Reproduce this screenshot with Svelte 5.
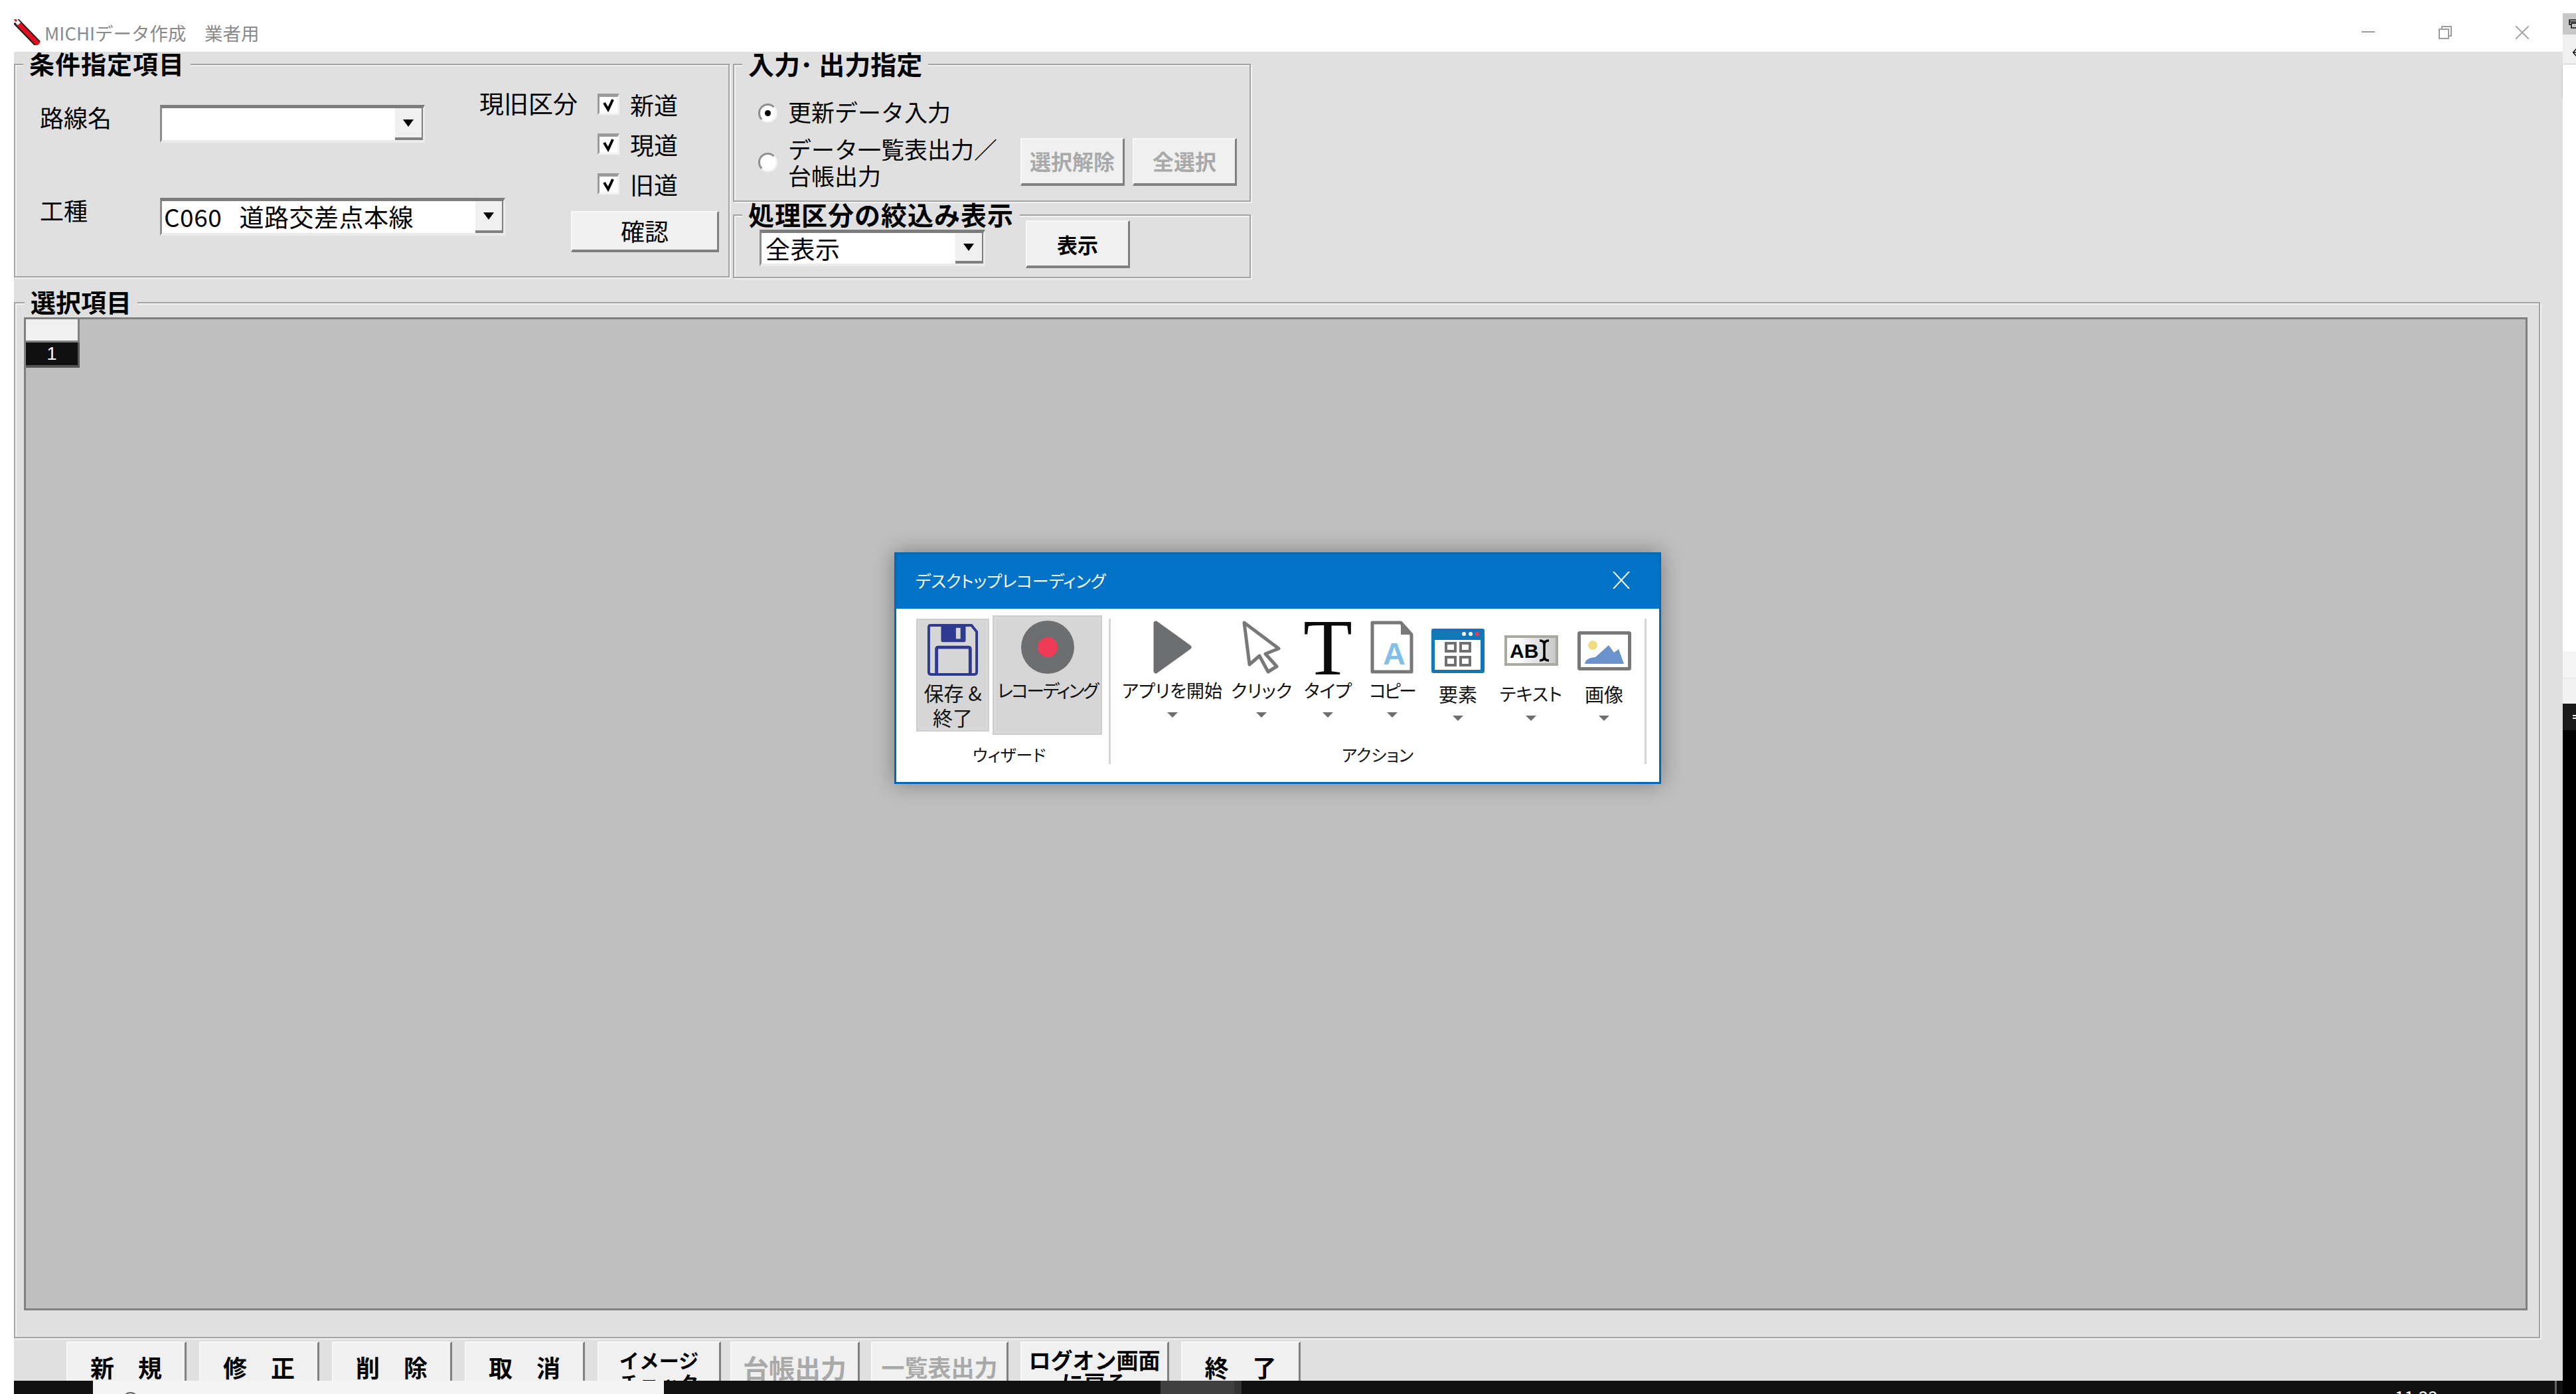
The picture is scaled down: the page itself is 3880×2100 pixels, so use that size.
<script>
	const actions = [
		{ lines: ['新　規'], w: 181, gap: 19 },
		{ lines: ['修　正'], w: 181, gap: 19 },
		{ lines: ['削　除'], w: 181, gap: 19 },
		{ lines: ['取　消'], w: 181, gap: 19 },
		{ lines: ['イメージ', 'チェック'], w: 186, gap: 14 },
		{ lines: ['台帳出力'], w: 195, gap: 17, off: true },
		{ lines: ['一覧表出力'], w: 207, gap: 18, off: true, tight: true },
		{ lines: ['ログオン画面', 'に戻る'], w: 224, gap: 18, big: true },
		{ lines: ['終　了'], w: 180, gap: 0 }
	];
</script>

<div class="screen">
	<div class="main">
		<header class="titlebar">
			<svg class="pencil" width="41" height="39" viewBox="0 0 41 39">
				<path d="M3 3 L36 37" stroke="#1a1a1a" stroke-width="11" />
				<path d="M5 5 L37 38" stroke="#e01020" stroke-width="7" />
				<path d="M2 1 L8 7" stroke="#f4f4f4" stroke-width="6" />
				<path d="M1 0 L4 3" stroke="#e01020" stroke-width="3" />
			</svg>
			<span class="apptitle">MICHIデータ作成　業者用</span>
			<div class="winctl">
				<svg width="20" height="20" viewBox="0 0 20 20"><path d="M0 9h20" stroke="#9c9c9c" stroke-width="2" /></svg>
				<svg width="20" height="20" viewBox="0 0 20 20" fill="none" stroke="#9c9c9c" stroke-width="2">
					<rect x="1" y="5" width="14" height="14" />
					<path d="M5 5V1h14v14h-4" />
				</svg>
				<svg width="20" height="20" viewBox="0 0 20 20"><path d="M0 0l20 20M20 0L0 20" stroke="#a6a6a6" stroke-width="2" /></svg>
			</div>
		</header>

		<div class="win">
			<div class="top">
				<fieldset class="cond">
					<legend>条件指定項目</legend>
					<div class="cond-body">
						<div class="cond-left">
							<div class="field">
								<span class="label">路線名</span>
								<div class="combo route"><span class="val"></span><span class="drop"><i></i></span></div>
							</div>
							<div class="field">
								<span class="label">工種</span>
								<div class="combo kind"><span class="val">C060   道路交差点本線</span><span class="drop"><i></i></span></div>
							</div>
						</div>
						<div class="cond-right">
							<div class="checks">
								<span class="label">現旧区分</span>
								<div class="checklist">
									{#each ['新道', '現道', '旧道'] as name}
										<div class="check">
											<span class="box">
												<svg width="22" height="22" viewBox="0 0 22 22"><path d="M4 8l6 10 7-15" fill="none" stroke="#000" stroke-width="4" /></svg>
											</span>
											<span class="label">{name}</span>
										</div>
									{/each}
								</div>
							</div>
							<button class="raised confirm">確認</button>
						</div>
					</div>
				</fieldset>

				<div class="top-right">
					<fieldset class="io">
						<legend>入力･ 出力指定</legend>
						<div class="io-row first">
							<span class="radio on"></span>
							<span class="label narrow">更新データ入力</span>
						</div>
						<div class="io-row second">
							<span class="radio"></span>
							<span class="label narrow two">データ一覧表出力／<br />台帳出力</span>
							<button class="raised sel" disabled>選択解除</button>
							<button class="raised sel" disabled>全選択</button>
						</div>
					</fieldset>
					<fieldset class="filter">
						<legend>処理区分の絞込み表示</legend>
						<div class="filter-row">
							<div class="combo all"><span class="val">全表示</span><span class="drop"><i></i></span></div>
							<button class="raised show">表示</button>
						</div>
					</fieldset>
				</div>
			</div>

			<fieldset class="items">
				<legend>選択項目</legend>
				<div class="grid">
					<div class="corner"></div>
					<div class="cell">1</div>
				</div>
			</fieldset>

			<div class="actions">
				{#each actions as a}
					<button
						class="raised act"
						class:two={a.lines.length > 1}
						class:tight={a.tight}
						class:big={a.big}
						disabled={a.off}
						style="width:{a.w}px;margin-right:{a.gap}px"
					>
						{#each a.lines as line}<span>{line}</span>{/each}
					</button>
				{/each}
			</div>
		</div>

		<footer class="taskbar">
			<div class="start"></div>
			<div class="search"><i></i></div>
			<div class="apps"></div>
			<div class="running"></div>
			<div class="running-edge"></div>
			<div class="tray"><span>11:22</span></div>
			<div class="showdesk"></div>
		</footer>
	</div>

	<aside class="rail">
		<div class="r-top"></div>
		<div class="r-tab">
			<svg width="11" height="14" viewBox="0 0 11 14" fill="none" stroke="#111" stroke-width="1.5"><path d="M11 1H1v7h3M1 4h10" /><rect x="4" y="6" width="9" height="7" /></svg>
		</div>
		<div class="r-back">
			<svg width="5" height="14" viewBox="0 0 5 14" fill="none" stroke="#111" stroke-width="1.5"><path d="M6 1L0.5 7 6 13M1 7h6" /></svg>
		</div>
		<div class="r-menu"></div>
		<div class="r-page"></div>
		<div class="r-a"></div>
		<div class="r-b"></div>
		<div class="r-c"><i></i></div>
		<div class="r-d"></div>
	</aside>

	<div class="dialog">
		<div class="dlg-title">
			<span>デスクトップレコーディング</span>
			<svg width="26" height="26" viewBox="0 0 26 26"><path d="M1 0l24 26M25 0L1 26" stroke="#fff" stroke-width="2" /></svg>
		</div>
		<div class="dlg-body">
			<div class="group wizard">
				<div class="tools">
					<div class="wbtn save">
						<svg width="78" height="80" viewBox="0 0 78 80">
							<path d="M5 2H68L76 12V74Q76 78 72 78H6Q2 78 2 74V5Q2 2 5 2Z" fill="none" stroke="#2e3a8f" stroke-width="4" />
							<path d="M21 3H59V25Q59 28 56 28H24Q21 28 21 25Z" fill="#2e3a8f" />
							<rect x="44" y="6" width="7" height="17" fill="#d6d6d6" />
							<path d="M14 78V39Q14 36 17 36H63Q66 36 66 39V78" fill="none" stroke="#2e3a8f" stroke-width="5" />
						</svg>
						<span class="t">保存 &amp;<br />終了</span>
					</div>
					<div class="wbtn rec">
						<svg width="80" height="80" viewBox="0 0 80 80">
							<circle cx="40" cy="40" r="40" fill="#6d6e70" />
							<circle cx="40" cy="40" r="15" fill="#ef3b55" />
						</svg>
						<span class="t">レコーディング</span>
					</div>
				</div>
				<span class="glabel">ウィザード</span>
			</div>
			<div class="sep"></div>
			<div class="group acts">
				<div class="tools">
					<div class="tool play">
						<div class="slot">
							<svg width="58" height="80" viewBox="0 0 58 80"><path d="M4 4L54 40 4 76Z" fill="#6d6e70" stroke="#6d6e70" stroke-width="7" stroke-linejoin="round" /></svg>
						</div>
						<span class="t">アプリを開始</span><i class="arr"></i>
					</div>
					<div class="tool cursor">
						<div class="slot">
							<svg width="58" height="80" viewBox="0 0 58 80"><path d="M3 3L55 42 35 50 52 69 39 77 26 53 11 66Z" fill="none" stroke="#77787a" stroke-width="5" stroke-linejoin="round" /></svg>
						</div>
						<span class="t">クリック</span><i class="arr"></i>
					</div>
					<div class="tool type">
						<div class="slot"><span class="bigt">T</span></div>
						<span class="t">タイプ</span><i class="arr"></i>
					</div>
					<div class="tool copy">
						<div class="slot">
							<svg width="65" height="80" viewBox="0 0 65 80">
								<path d="M3 3H46L62 21V77H3Z" fill="#fff" stroke="#77787a" stroke-width="5" stroke-linejoin="round" />
								<path d="M46 3L62 21H46Z" fill="#77787a" />
								<text x="19" y="66" class="ic-a">A</text>
							</svg>
						</div>
						<span class="t">コピー</span><i class="arr"></i>
					</div>
					<div class="tool low element">
						<div class="slot">
							<svg width="80" height="67" viewBox="0 0 80 67">
								<rect width="80" height="67" rx="3" fill="#1178b8" />
								<rect x="5" y="17" width="69" height="45" fill="#fff" />
								<circle cx="49" cy="8" r="3" fill="#fff" />
								<circle cx="59" cy="8" r="3" fill="#fff" />
								<circle cx="69" cy="8" r="3" fill="#ef3b55" />
								<g fill="none" stroke="#6f6f6f" stroke-width="4">
									<rect x="22" y="22" width="14" height="12" />
									<rect x="44" y="22" width="14" height="12" />
									<rect x="22" y="43" width="14" height="12" />
									<rect x="44" y="43" width="14" height="12" />
								</g>
							</svg>
						</div>
						<span class="t">要素</span><i class="arr"></i>
					</div>
					<div class="tool low text">
						<div class="slot">
							<svg width="81" height="46" viewBox="0 0 81 46">
								<defs>
									<linearGradient id="abi" x1="0" x2="1">
										<stop offset="0.2" stop-color="#fff" />
										<stop offset="1" stop-color="#c6c6c8" />
									</linearGradient>
								</defs>
								<rect x="2" y="2" width="77" height="42" fill="url(#abi)" stroke="#a9aa9f" stroke-width="4" />
								<text x="8" y="34" class="ic-ab">AB</text>
								<path d="M53 8Q60 8 60 14V32Q60 38 53 38M67 8Q60 8 60 14V32Q60 38 67 38" fill="none" stroke="#000" stroke-width="3.5" />
							</svg>
						</div>
						<span class="t">テキスト</span><i class="arr"></i>
					</div>
					<div class="tool low image">
						<div class="slot">
							<svg width="81" height="59" viewBox="0 0 81 59">
								<rect x="2.5" y="2.5" width="76" height="54" rx="1" fill="#fff" stroke="#77787a" stroke-width="5" />
								<circle cx="23" cy="21" r="7" fill="#efdc82" />
								<path d="M11 49Q12 40 27 39L47 21 55 32 62 27 70 49Z" fill="#6a93cb" />
							</svg>
						</div>
						<span class="t">画像</span><i class="arr"></i>
					</div>
				</div>
				<span class="glabel">アクション</span>
			</div>
			<div class="sep"></div>
		</div>
	</div>
</div>

<style>
	:global(body) {
		margin: 0;
		background: #fff;
	}

	.screen {
		position: relative;
		display: flex;
		width: 3880px;
		height: 2100px;
		overflow: hidden;
		background: #fff;
		font-family: 'Noto Sans CJK JP', sans-serif;
		color: #000;
	}

	.main {
		display: flex;
		flex-direction: column;
		width: 3860px;
		flex: none;
	}

	.titlebar {
		display: flex;
		align-items: center;
		box-sizing: border-box;
		height: 78px;
		padding: 19px 51px 0 21px;
		flex: none;
	}

	.pencil {
		flex: none;
	}

	.apptitle {
		margin-left: 5px;
		font-size: 27.5px;
		color: #8a8a8a;
	}

	.winctl {
		display: flex;
		gap: 96px;
		margin-left: auto;
	}

	.win {
		box-sizing: border-box;
		height: 2002px;
		margin-left: 21px;
		padding-top: 3px;
		overflow: hidden;
		background: #e0e0e0;
		flex: none;
	}

	fieldset {
		box-sizing: border-box;
		min-width: 0;
		margin: 0;
		padding: 0;
		border: 2px solid #a4a4a4;
		box-shadow:
			inset 2px 2px 0 #f2f2f2,
			2px 2px 0 #f2f2f2;
	}

	legend {
		padding: 0 9px 4px;
		background: #e0e0e0;
		font-size: 38px;
		font-weight: 700;
		line-height: 28px;
		white-space: nowrap;
	}

	.top {
		display: flex;
		gap: 5px;
		height: 338px;
		margin-bottom: 21px;
	}

	.cond {
		width: 1078px;
		height: 337px;
	}

	.cond legend {
		margin-left: 12px;
		letter-spacing: 1px;
	}

	.cond-body {
		display: flex;
	}

	.cond-left {
		display: flex;
		flex-direction: column;
		gap: 83px;
		width: 699px;
		flex: none;
		padding: 45px 0 0 37px;
	}

	.field {
		display: flex;
		align-items: flex-start;
		height: 57px;
	}

	.field .label {
		width: 181px;
		flex: none;
		font-size: 36px;
	}

	.label {
		font-size: 36px;
		line-height: 36px;
		white-space: nowrap;
	}

	.combo {
		display: flex;
		box-sizing: border-box;
		height: 57px;
		flex: none;
		background: #fff;
		border-style: solid;
		border-width: 5px 3px 4px 3px;
		border-color: #7c7c7c #ebebeb #ebebeb #8c8c8c;
	}

	.route {
		width: 399px;
	}

	.kind {
		width: 520px;
	}

	.all {
		width: 340px;
		height: 55px;
		margin-top: 14px;
	}

	.val {
		flex: 1;
		padding-left: 3px;
		font-size: 37px;
		letter-spacing: 0.5px;
		line-height: 46px;
		white-space: pre;
	}

	.all .val {
		padding-left: 6px;
		font-size: 37px;
	}

	.drop {
		display: flex;
		align-items: center;
		justify-content: center;
		box-sizing: border-box;
		width: 42px;
		flex: none;
		background: #f0f0f0;
		border-bottom: 4px solid #808080;
		border-right: 2px solid #808080;
	}

	.drop i {
		width: 0;
		height: 0;
		border-style: solid;
		border-width: 11px 8px 0 8px;
		border-color: #000 transparent transparent transparent;
	}

	.cond-right {
		margin-left: -36px;
		padding-top: 24px;
	}

	.checks {
		display: flex;
		align-items: flex-start;
	}

	.checks > .label {
		width: 177px;
		flex: none;
		margin-left: -1px;
		margin-right: 1px;
		font-size: 37px;
	}

	.checklist {
		display: flex;
		flex-direction: column;
		gap: 20px;
	}

	.check {
		display: flex;
		align-items: center;
		gap: 16px;
		height: 40px;
	}

	.box {
		display: flex;
		align-items: center;
		justify-content: center;
		box-sizing: border-box;
		width: 33px;
		height: 32px;
		background: #fff;
		border-style: solid;
		border-width: 5px 3px 3px 3px;
		border-color: #9b9b9b #f2f2f2 #f2f2f2 #9b9b9b;
	}

	.raised {
		box-sizing: border-box;
		padding: 0;
		background: #f0f0f0;
		border-style: solid;
		border-width: 2px 3px 4px 2px;
		border-color: #f8f8f8 #808080 #808080 #f8f8f8;
		border-radius: 0;
		font-family: inherit;
		color: #000;
		white-space: nowrap;
	}

	.raised:disabled {
		color: #a9a9a9;
	}

	.confirm {
		display: block;
		width: 223px;
		height: 62px;
		margin: 21px 0 0 137px;
		padding-bottom: 2px;
		font-size: 36px;
		line-height: 50px;
	}

	.top-right {
		display: flex;
		flex-direction: column;
		gap: 4px;
		width: 780px;
	}

	.io {
		height: 223px;
	}

	.io legend {
		margin-left: 12px;
		font-size: 39px;
	}

	.filter legend {
		margin-left: 12px;
		font-size: 39px;
		letter-spacing: 1px;
	}

	.io-row {
		display: flex;
		align-items: center;
		padding-left: 36px;
	}

	.first {
		height: 40px;
		margin-top: 37px;
	}

	.first .label {
		margin-bottom: 5px;
	}

	.second {
		height: 78px;
		margin-top: 15px;
	}

	.radio {
		display: flex;
		align-items: center;
		justify-content: center;
		box-sizing: border-box;
		width: 29px;
		height: 29px;
		flex: none;
		margin-right: 16px;
		background: #fff;
		border: 3px solid;
		border-color: #8f8f8f #f4f4f4 #f4f4f4 #8f8f8f;
		border-radius: 50%;
	}

	.radio.on::after {
		content: '';
		width: 9px;
		height: 9px;
		background: #000;
		border-radius: 50%;
	}

	.narrow {
		font-size: 35px;
	}

	.two {
		width: 350px;
		flex: none;
		line-height: 40px;
	}

	.sel {
		width: 157px;
		height: 72px;
		margin-right: 12px;
		padding-bottom: 3px;
		font-size: 32px;
		font-weight: 700;
		flex: none;
	}

	.filter {
		height: 111px;
	}

	.filter-row {
		display: flex;
		align-items: flex-start;
		gap: 61px;
		margin-top: -8px;
		padding-left: 38px;
	}

	.show {
		width: 157px;
		height: 72px;
		font-size: 31px;
		font-weight: 700;
	}

	.items {
		width: 3805px;
		height: 1576px;
		padding: 6px 17px 0 13px;
	}

	.items legend {
		margin-left: 1px;
	}

	.grid {
		box-sizing: border-box;
		height: 1496px;
		background: #bfbfbf;
		border-style: solid;
		border-width: 3px;
		border-color: #808080;
	}

	.corner {
		box-sizing: border-box;
		width: 81px;
		height: 35px;
		background: #f0f0f0;
		border-bottom: 3px solid #808080;
		border-right: 3px solid #808080;
	}

	.cell {
		box-sizing: border-box;
		width: 81px;
		height: 38px;
		background: #101010;
		border-bottom: 4px solid #555;
		border-right: 3px solid #555;
		font-size: 27px;
		font-family: 'Liberation Sans', sans-serif;
		line-height: 34px;
		text-align: center;
		color: #fff;
	}

	.actions {
		display: flex;
		height: 78px;
		margin: 5px 0 0 79px;
	}

	.act {
		display: flex;
		flex-direction: column;
		align-items: center;
		justify-content: center;
		height: 78px;
		flex: none;
		padding-bottom: 5px;
		border-bottom: none;
		font-size: 36px;
		font-weight: 700;
		line-height: 40px;
	}

	.act.two {
		justify-content: flex-start;
		padding: 8px 0 0;
		font-size: 30px;
		line-height: 34px;
	}

	.act.big {
		font-size: 33px;
	}

	.act:disabled {
		font-size: 39px;
	}

	.act.tight:disabled {
		font-size: 35px;
	}

	.taskbar {
		display: flex;
		height: 20px;
		margin-left: 21px;
		overflow: hidden;
		background: #111;
		flex: none;
	}

	.start {
		width: 119px;
		flex: none;
	}

	.search {
		box-sizing: border-box;
		width: 860px;
		flex: none;
		padding: 17px 0 0 44px;
		background: #f3f3f3;
	}

	.search i {
		display: block;
		box-sizing: border-box;
		width: 25px;
		height: 25px;
		border: 2px solid #555;
		border-radius: 50%;
	}

	.apps {
		width: 748px;
		flex: none;
	}

	.running {
		width: 111px;
		flex: none;
		background: #404040;
	}

	.running-edge {
		width: 11px;
		flex: none;
		background: #333;
	}

	.tray {
		box-sizing: border-box;
		width: 1978px;
		flex: none;
		padding: 9px 0 0 1737px;
		color: #fff;
		font-size: 26px;
		line-height: 30px;
		white-space: nowrap;
	}

	.showdesk {
		width: 3px;
		flex: none;
		background: #666;
	}

	.rail {
		display: flex;
		flex-direction: column;
		width: 20px;
		flex: none;
	}

	.r-top {
		height: 20px;
	}

	.r-tab {
		display: flex;
		box-sizing: border-box;
		height: 32px;
		padding: 9px 0 0 9px;
		overflow: hidden;
		background: #c8c8c8;
	}

	.r-back {
		box-sizing: border-box;
		height: 45px;
		padding: 15px 0 0 15px;
		background: #f0f0f0;
		border-bottom: 1px solid #c8c8c8;
	}

	.r-menu {
		height: 49px;
		background: #fff;
		box-shadow: 0 2px 3px rgba(0, 0, 0, 0.2);
	}

	.r-page {
		height: 836px;
		background: #fff;
	}

	.r-a {
		height: 39px;
		background: #f5f5f5;
		border-top: 1px solid #eee;
		box-sizing: border-box;
	}

	.r-b {
		height: 39px;
		background: #f2f2f2;
		border-top: 1px solid #e4e4e4;
		box-sizing: border-box;
	}

	.r-c {
		box-sizing: border-box;
		height: 40px;
		padding: 17px 0 0 15px;
		background: #1a1a1a;
	}

	.r-c i {
		display: block;
		height: 2px;
		border-top: 2px solid #fff;
		border-bottom: 2px solid #fff;
	}

	.r-d {
		flex: 1;
		background: #000;
	}

	.dialog {
		position: absolute;
		left: 1347px;
		top: 832px;
		box-sizing: border-box;
		width: 1155px;
		height: 349px;
		background: #fff;
		border: 3px solid #0069b4;
		box-shadow: 0 0 30px rgba(0, 0, 0, 0.35);
	}

	.dlg-title {
		display: flex;
		align-items: center;
		justify-content: space-between;
		box-sizing: border-box;
		height: 82px;
		padding: 0 44px 4px 29px;
		background: #0173c7;
		color: #fff;
		font-size: 25px;
		font-feature-settings: 'palt';
	}

	.dlg-body {
		display: flex;
		align-items: flex-start;
		padding: 10px 0 0 30px;
		font-size: 27px;
		font-feature-settings: 'palt';
		color: #111;
	}

	.group {
		display: flex;
		flex-direction: column;
	}

	.wizard {
		width: 280px;
		flex: none;
	}

	.acts {
		width: 804px;
		flex: none;
	}

	.tools {
		display: flex;
		align-items: flex-start;
		gap: 5px;
		height: 193px;
	}

	.acts .tools {
		gap: 0;
		padding-top: 8px;
		box-sizing: border-box;
	}

	.glabel {
		font-size: 25px;
		line-height: 32px;
		text-align: center;
	}

	.sep {
		width: 3px;
		height: 219px;
		flex: none;
		margin: 5px 0 0 10px;
		background: #d5d5d5;
	}

	.acts + .sep {
		margin-left: 0;
	}

	.wbtn {
		display: flex;
		flex-direction: column;
		align-items: center;
		box-sizing: border-box;
		padding-top: 5px;
		background: #d6d6d6;
		border: 3px solid #d0d0d0;
		box-shadow: inset 0 0 0 1px #e2e2e2;
		text-align: center;
	}

	.save {
		width: 110px;
		height: 170px;
		margin-top: 5px;
	}

	.save .t {
		margin-top: 7px;
		font-size: 30px;
		line-height: 37px;
		white-space: nowrap;
	}

	.rec {
		width: 165px;
		height: 180px;
	}

	.rec .t {
		margin-top: 8px;
		letter-spacing: -2.6px;
		line-height: 34px;
		white-space: nowrap;
	}

	.tool {
		display: flex;
		flex-direction: column;
		align-items: center;
		flex: none;
	}

	.tool.low {
		padding-top: 5px;
	}

	.play {
		width: 185px;
	}

	.cursor {
		width: 84px;
	}

	.type {
		width: 116px;
	}

	.copy {
		width: 77px;
	}

	.element {
		width: 122px;
	}

	.text {
		width: 98px;
	}

	.image {
		width: 122px;
	}

	.slot {
		display: flex;
		align-items: center;
		justify-content: center;
		height: 80px;
	}

	.tool .t {
		margin-top: 8px;
		line-height: 34px;
		white-space: nowrap;
	}

	.copy .t {
		letter-spacing: -3px;
	}

	.element .t,
	.image .t {
		font-size: 29px;
	}

	.arr {
		width: 0;
		height: 0;
		margin-top: 16px;
		border-style: solid;
		border-width: 8px 8px 0 8px;
		border-color: #6d6e70 transparent transparent transparent;
	}

	.bigt {
		font-family: 'Liberation Serif', serif;
		font-size: 121px;
		line-height: 80px;
		color: #0a0a0a;
	}

	.ic-a {
		font-family: 'Liberation Sans', sans-serif;
		font-size: 47px;
		font-weight: 700;
		fill: #7fbfe8;
	}

	.ic-ab {
		font-family: 'Liberation Sans', sans-serif;
		font-size: 30px;
		font-weight: 700;
		fill: #000;
	}
</style>
